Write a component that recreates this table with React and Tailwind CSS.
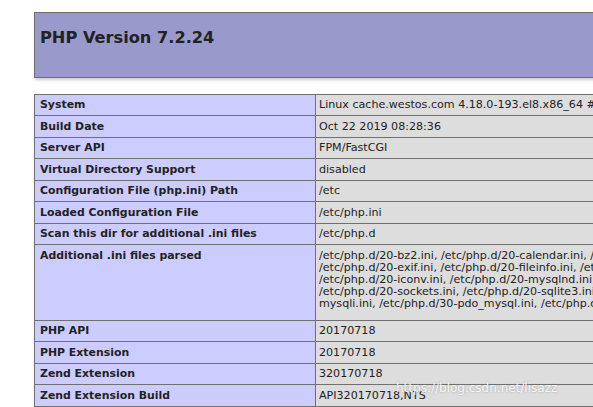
import React from "react";

const rows = [
  ["System", ["Linux cache.westos.com 4.18.0-193.el8.x86_64 #1 SMP Fri May 8 10:59:10 UTC 2020 x86_64"]],
  ["Build Date", ["Oct 22 2019 08:28:36"]],
  ["Server API", ["FPM/FastCGI"]],
  ["Virtual Directory Support", ["disabled"]],
  ["Configuration File (php.ini) Path", ["/etc"]],
  ["Loaded Configuration File", ["/etc/php.ini"]],
  ["Scan this dir for additional .ini files", ["/etc/php.d"]],
  [
    "Additional .ini files parsed",
    [
      "/etc/php.d/20-bz2.ini, /etc/php.d/20-calendar.ini, /etc/php.d/20-ctype.ini, /etc/php.d/20-curl.ini, /etc/php.d/20-dom.ini,",
      "/etc/php.d/20-exif.ini, /etc/php.d/20-fileinfo.ini, /etc/php.d/20-ftp.ini, /etc/php.d/20-gettext.ini,",
      "/etc/php.d/20-iconv.ini, /etc/php.d/20-mysqlnd.ini, /etc/php.d/20-pdo.ini, /etc/php.d/20-phar.ini, /etc/php.d/20-simplexml.ini,",
      "/etc/php.d/20-sockets.ini, /etc/php.d/20-sqlite3.ini, /etc/php.d/20-tokenizer.ini, /etc/php.d/20-xml.ini, /etc/php.d/30-",
      "mysqli.ini, /etc/php.d/30-pdo_mysql.ini, /etc/php.d/30-pdo_sqlite.ini, /etc/php.d/30-xmlreader.ini",
    ],
    true,
  ],
  ["PHP API", ["20170718"]],
  ["PHP Extension", ["20170718"]],
  ["Zend Extension", ["320170718"]],
  ["Zend Extension Build", ["API320170718,NTS"]],
];

export default function App() {
  return (
    <div className="relative w-full h-[407px] overflow-hidden bg-white font-['DejaVu_Sans',sans-serif] text-[#222]">
      <div className="pl-[34px] pt-[12px] w-[900px]">
        <div className="w-[831px] h-[66px] border border-[#6e6e6e] bg-[#9999cc] shadow-[1px_2px_3px_#cccccc] pl-[5px] pt-[15.5px]">
          <h1 className="text-[16.2px] font-bold leading-[18.6px]">PHP Version 7.2.24</h1>
        </div>
        <div className="mt-[15.5px] w-[831px] grid grid-cols-[280px_1fr] gap-px bg-[#707070] border border-[#707070] shadow-[1px_2px_3px_#cccccc] leading-[12px]">
          {rows.map(([k, v, tall]) => (
            <React.Fragment key={k}>
              <div className={`bg-[#ccccff] font-bold text-[10.9px] pl-[5px] pt-[4.5px] whitespace-nowrap ${tall ? "h-[74.7px]" : "h-[20.5px]"}`}>
                {k}
              </div>
              <div className={`bg-[#dddddd] text-[11.1px] pl-[3px] pt-[4.5px] whitespace-nowrap overflow-hidden ${tall ? "h-[74.7px]" : "h-[20.5px]"}`}>
                {v.map((line, i) => (
                  <div key={i}>{line}</div>
                ))}
              </div>
            </React.Fragment>
          ))}
        </div>
      </div>
      <div className="absolute left-[396px] top-[380px] text-[12px] leading-[16px] text-white/90 [text-shadow:0_0_2px_rgba(90,90,90,0.5)] font-['DejaVu_Sans',sans-serif]">
        https://blog.csdn.net/lisazz
      </div>
    </div>
  );
}
